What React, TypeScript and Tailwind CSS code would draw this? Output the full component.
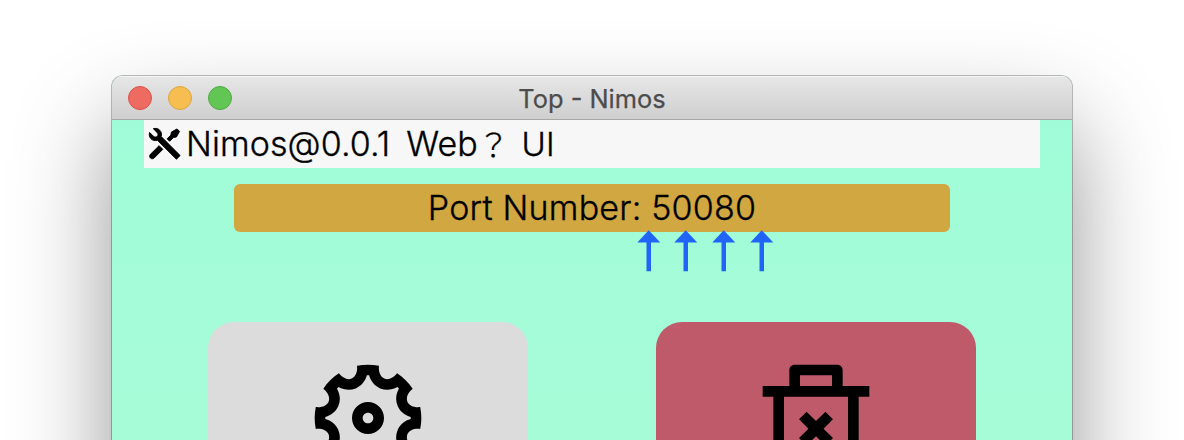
import { RiToolsFill, RiSettings5Line, RiDeleteBin2Line } from "react-icons/ri";

const arrows = [0, 37, 75, 113];

export default function App() {
  return (
    <div className="h-[440px] overflow-hidden bg-white px-[112px] pt-[76px] font-['Inter','Noto_Sans_CJK_JP',sans-serif] text-black">
      <div className="h-[1100px] w-[960px] overflow-hidden rounded-[11px] bg-[#a2fcd8] shadow-[0_0_0_1px_rgba(0,0,0,0.25),0_50px_96px_rgba(0,0,0,0.42)]">
        <div className="relative flex h-11 items-center justify-center border-b border-[#a7a7a7] bg-linear-to-b from-[#e7e7e7] to-[#cfcfcf] shadow-[inset_0_1px_0_#f5f5f5]">
          <div className="absolute top-[10px] left-4 flex gap-4">
            <span className="size-6 rounded-full border border-[#d95349] bg-[#ed6b60]" />
            <span className="size-6 rounded-full border border-[#dca442] bg-[#f6be50]" />
            <span className="size-6 rounded-full border border-[#50a943] bg-[#62c655]" />
          </div>
          <span className="mt-[3px] text-[25.4px] leading-none whitespace-pre text-[#4c4c4c] [-webkit-text-stroke:0.25px]">Top - Nimos</span>
        </div>
        <main className="h-[1056px] bg-linear-to-b from-[#a0fcd8] to-[#b8fcd8] px-8">
          <header className="flex h-12 items-center bg-[#f7f7f7]">
            <RiToolsFill className="size-[42px] shrink-0 stroke-black stroke-[0.55]" />
            <h1 className="flex items-center text-[34px] leading-[48px] font-light whitespace-pre [-webkit-text-stroke:0.35px]">
              <span className="tracking-[0.1px]">Nimos@0.0.1</span>
              <span className="ml-[16px]">Web</span>
              <span className="mt-1 w-[44px] text-[32px]">？</span>
              <span className="text-[33px]">UI</span>
            </h1>
          </header>
          <div className="relative mx-auto mt-4 flex h-12 w-[716px] items-center justify-center rounded-md bg-[#d1a741]">
            <span className="text-[34px] leading-[48px] font-light tracking-[0.2px] whitespace-pre [-webkit-text-stroke:0.35px]">Port Number: 50080</span>
            <svg className="absolute top-[46px] left-[403px]" width="138" height="42" viewBox="0 0 138 42" fill="#2064f8">
              {arrows.map((x) => (
                <path key={x} transform={`translate(${x} 0)`} d="M11.7 0.3L23.3 12.5H14V41.3H9.5V12.5H0.3Z" />
              ))}
            </svg>
          </div>
          <div className="mt-[90px] flex justify-between px-16">
            <div className="flex h-80 w-80 justify-center rounded-[26px] bg-[#dcdcdc] pt-8">
              <RiSettings5Line className="size-32" />
            </div>
            <div className="flex h-80 w-80 justify-center rounded-[26px] bg-[#bf5a6b] pt-8">
              <RiDeleteBin2Line className="size-32" />
            </div>
          </div>
        </main>
      </div>
    </div>
  );
}
